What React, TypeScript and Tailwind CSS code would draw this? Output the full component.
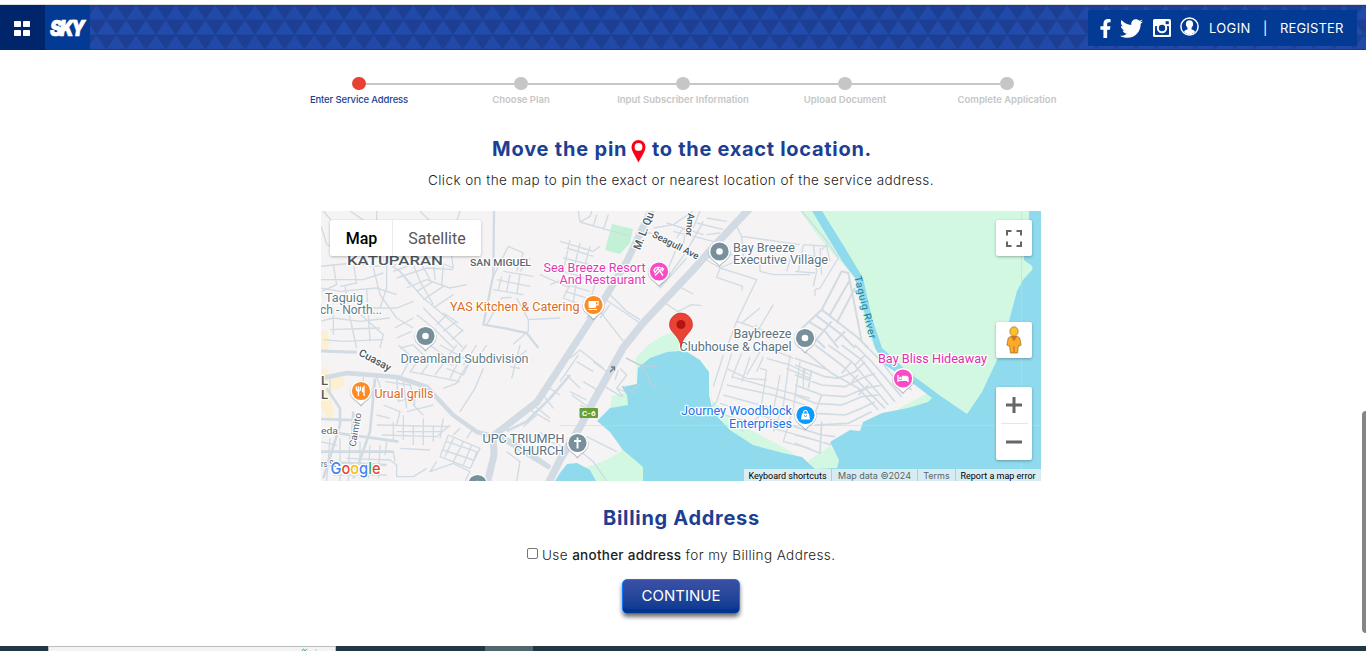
import React from "react";
import { FaFacebookF, FaTwitter } from "react-icons/fa";

const steps = [
  "Enter Service Address",
  "Choose Plan",
  "Input Subscriber Information",
  "Upload Document",
  "Complete Application",
];

function HeaderPattern() {
  return (
    <svg className="absolute inset-0 h-full w-full" aria-hidden="true">
      <defs>
        <pattern id="tri" width="19.8" height="30" x="7.4" y="0" patternUnits="userSpaceOnUse">
          <rect width="19.8" height="30" fill="#1c3f94" />
          <path d="M9.9 0.5 19.6 14.5H.2z" fill="#214aa8" />
          <path d="M0 15.5 9.6 29.5H-9.6zM19.8 15.5 29.4 29.5H10.2z" fill="#214cab" />
        </pattern>
      </defs>
      <rect width="100%" height="100%" fill="url(#tri)" />
      <rect y="44" width="100%" height="1" fill="#173a8c" />
    </svg>
  );
}

function InstagramIcon() {
  return (
    <svg width="18" height="18" viewBox="0 0 18 18">
      <rect width="18" height="18" rx="1.5" fill="#fff" />
      <rect x="2" y="7" width="14" height="9" rx="0.8" fill="#033a93" />
      <rect x="12.6" y="2.2" width="3.2" height="3" fill="#033a93" />
      <circle cx="9" cy="9" r="5.2" fill="#fff" />
      <circle cx="9" cy="9" r="3.2" fill="#033a93" />
    </svg>
  );
}

function UserIcon() {
  return (
    <svg width="19" height="19" viewBox="0 0 19 19" fill="none">
      <circle cx="9.5" cy="9.5" r="8.6" stroke="#fff" strokeWidth="1.5" />
      <path
        fill="#fff"
        d="M9.5 3.3c2.4 0 3.6 1.6 3.6 3.7 0 1.6-.7 2.8-1.6 3.7v1.5c.9.7 2.7.9 3.5 2.2-1.4 1.9-3.3 2.8-5.5 2.8s-4.1-.9-5.5-2.8c.8-1.3 2.6-1.5 3.5-2.2v-1.5C6.600 9.800 5.900 8.600 5.900 7c0-2.100 1.200-3.700 3.600-3.700z"
      />
    </svg>
  );
}

function Header() {
  return (
    <header className="relative flex h-[45px] shrink-0 justify-between bg-[#1c3f94]">
      <HeaderPattern />
      <div className="relative flex">
        <button className="flex h-[45px] w-[45px] items-center justify-center bg-[#00256a] pt-px pr-px">
          <svg width="16" height="15" viewBox="0 0 16 15" fill="#fff">
            <rect width="7" height="6" rx="0.8" />
            <rect x="9" width="7" height="6" rx="0.8" />
            <rect y="9" width="7" height="6" rx="0.8" />
            <rect x="9" y="9" width="7" height="6" rx="0.8" />
          </svg>
        </button>
        <div className="flex h-[45px] w-[45px] items-center justify-center bg-[#033a93]">
          <svg width="45" height="45" viewBox="0 0 45 45" className="overflow-visible">
            <g transform="translate(5 31) scale(.88 1.05)">
              <text
                fill="#fff"
                stroke="#fff"
                strokeWidth="0.7"
                letterSpacing="-2.6"
                className="font-[Inter,sans-serif] text-[20.5px] font-black italic"
              >
                SKY
              </text>
            </g>
          </svg>
        </div>
      </div>
      <div className="relative mt-[5px] mr-[9px] flex h-9 w-[269px] items-center bg-[#033a93] text-[13px] text-white">
        <FaFacebookF className="ml-[11px] h-[19px] w-[13px]" />
        <FaTwitter className="ml-[8px] h-[23px] w-[23px]" />
        <span className="ml-[10px] -mt-px">
          <InstagramIcon />
        </span>
        <span className="ml-[9px] -mt-[3px]">
          <UserIcon />
        </span>
        <span className="mt-[2px] ml-[10px] w-[42px] whitespace-nowrap tracking-[0.35px]">LOGIN</span>
        <span className="mt-px ml-[12px] w-[5px]">|</span>
        <span className="mt-[2px] ml-[12px] whitespace-nowrap tracking-[0.15px]">REGISTER</span>
      </div>
    </header>
  );
}

function Stepper() {
  return (
    <ol className="mx-auto mt-[27px] grid w-[810px] grid-cols-5">
      {steps.map((s, i) => (
        <li key={s} className="flex flex-col items-center">
          <div className="flex h-[13px] w-full items-center">
            <div className={i === 0 ? "h-[2px] flex-1" : "h-[2px] flex-1 bg-[#c6c6c6]"} />
            <div
              className={
                i === 0
                  ? "h-[13px] w-[14px] rounded-full bg-[#e84134]"
                  : "h-[13px] w-[14px] rounded-full bg-[#c6c6c6]"
              }
            />
            <div className={i === 4 ? "h-[2px] flex-1" : "h-[2px] flex-1 bg-[#c6c6c6]"} />
          </div>
          <span
            className={
              i === 0
                ? "mt-[3px] text-[9.5px] leading-[14px] font-medium tracking-[-0.14px] whitespace-nowrap text-[#1c3f94]"
                : "mt-[3px] text-[9.5px] leading-[14px] font-semibold whitespace-nowrap text-[#c6c6c6]"
            }
          >
            {s}
          </span>
        </li>
      ))}
    </ol>
  );
}

type LabelProps = {
  x: number;
  y: number;
  w: number;
  fill: string;
  children: string;
  size?: number;
  weight?: number;
  rotate?: number;
};

function Label({ x, y, w, fill, children, size = 12.3, weight = 400, rotate = 0 }: LabelProps) {
  return (
    <text
      x={x}
      y={y}
      fill={fill}
      fontSize={size}
      fontWeight={weight}
      textLength={w}
      lengthAdjust="spacingAndGlyphs"
      stroke="#fff"
      strokeWidth={2.4}
      strokeLinejoin="round"
      paintOrder="stroke"
      transform={rotate ? `rotate(${rotate} ${x} ${y})` : undefined}
    >
      {children}
    </text>
  );
}

function Pin({ x, y, fill, children }: { x: number; y: number; fill: string; children: React.ReactNode }) {
  return (
    <g transform={`translate(${x} ${y})`}>
      <path d="M0-10.600A10.600 10.600 0 0 1 7.800 7.200C5 9.800 2.500 11 0 14.500-2.500 11-5 9.800-7.800 7.200A10.600 10.600 0 0 1 0-10.600z" fill="#76838c" stroke="#76838c" strokeWidth=".6" opacity=".55" transform="translate(0 .7)" />
      <path d="M0-10.600A10.600 10.600 0 0 1 7.800 7.200C5 9.800 2.500 11 0 14-2.500 11-5 9.800-7.800 7.200A10.600 10.600 0 0 1 0-10.600z" fill="#fff" />
      <circle r="9.100" fill={fill} />
      {children}
    </g>
  );
}

function Roads() {
  return (
    <g fill="none" stroke="#d1dbe4" strokeLinejoin="round">
      <g transform="translate(320 208) scale(.33333)" strokeWidth="4">
        <path d="M0 48 12 80 20 110 60 125 180 150 240 190 310 270 370 320 430 370M10 9 70 80 130 110M90 9 150 50 210 60M170 9V50M300 9 330 40M420 9 410 40" />
        <path d="M0 175 100 165 160 175 230 170M40 170 50 230 5 250M100 165 110 225 60 235M0 215 130 215 190 195M75 235 90 330 110 420M0 240 60 250 170 240 230 260M200 150 200 240 180 300M160 180 180 260 230 330 280 360M0 340 40 330 120 340 210 330M120 300 230 300 280 280M40 300V380M100 300 190 380 180 420M30 365 180 360M140 240 150 400M10 395 70 400 190 395" />
        <path d="M220 190 330 150 400 180 390 110M230 210 320 180 400 185M260 240 320 215 390 240 440 230M240 190 270 230M280 170 300 220 340 290M300 160 330 215M340 155 345 215M370 170 365 230M290 250 340 220M310 275 370 235M340 300 400 260" />
        <path d="M290 320 340 360 400 420M310 300 370 360 430 420M370 315 415 345M350 350 380 320M370 370 410 340M395 395 430 365M225 360 280 330M230 390 275 370M240 420 280 410" />
        <path d="M520 205 565 115 610 135 590 190M540 150 600 165M550 190 640 205M530 215 630 235M520 245 610 260M545 205 535 245M570 200 560 250M600 200 590 260M630 150 600 190M660 200 750 240M690 230 740 210M590 270 625 335 720 330M625 335V370L580 408M500 350 545 270 575 268" />
        <path strokeWidth="7" d="M522 9 520 200 490 350 560 362 620 375 655 420" />
      </g>
      <g transform="translate(320 345) scale(.33333)" strokeWidth="4">
        <path strokeWidth="9" d="M0 18 110 22M0 100 80 85 120 90" />
        <path d="M235 0 275 35 240 100M280 0 320 40 400 60M330 0 370 30M360 0 450 50 430 90 380 70M440 0 400 50M410 0 380 40M470 0 430 60M300 40 270 80 420 110M330 50 305 85M370 55 345 90M410 60 390 100M440 60 410 115 370 130M490 70 465 130 420 200M600 0 575 100M580 50 620 15M570 65 600 70M500 0 480 30" />
        <path strokeWidth="8" d="M20 130 60 190V240L10 400M0 222 120 226M20 260 235 290M0 320 220 320M0 350 200 360M165 100 150 260 100 400M100 200 95 300" />
        <path d="M30 100V140M130 90V140M170 95 190 150 250 160M195 110 270 120M230 100 235 170 290 150M250 110 260 190M270 115 285 180M300 120 280 180 310 210M190 180 240 200 230 240M170 210 210 220M260 200 300 190 340 180M170 240 390 245M185 270 350 275 390 240M200 290 195 330M220 230V290M250 210V285M280 240V300M310 220V300M340 240V290M370 220 360 280M230 260H370M240 310 330 315M220 320 225 350" />
        <path d="M60 280V408M90 270 85 408M30 280 20 408M120 290V400M150 300 145 400M180 300 175 400M60 370H170M0 290 50 300M80 340 210 345 230 360V395H280L320 370M40 390H200" />
        <path d="M385 270 480 310 450 370 360 335 385 270M400 280 375 335M430 290 400 350M455 300 430 360M380 290 470 320M370 315 460 345M350 350 330 380 400 355 450 380 435 408M420 250 400 270M460 250 440 280M470 320 460 350M540 295 560 270" />
        <path strokeWidth="8" d="M530 265 600 300 690 365M560 258 620 230 690 160 750 90" />
        <path d="M630 195 690 230M650 210 610 245M640 180 690 220M670 150 700 190M690 130 720 150M560 320 600 350 590 408M660 260 690 290 740 310" />
      </g>
      <g transform="translate(560 208) scale(.33333)" strokeWidth="4">
        <path d="M55 9 60 42 210 85M60 42 90 25 95 9M100 55 110 20M130 65 145 20M0 100 100 130 120 115M30 95 10 190 60 205M20 120 100 145M10 150 110 175M60 105 40 190M90 115 70 190M40 210 10 270 60 290M60 205 110 225M20 230 90 250M15 250 80 270M50 220 40 280M110 210 90 280M80 330 120 280M130 270 240 345M150 260 200 310 240 335M120 310 190 400M150 290 120 330" />
        <path d="M250 70 310 85 320 115M280 60 340 50 400 9M320 45 430 80M340 70 460 100M370 60 350 90M380 50 370 110M420 9 400 60M430 40 380 130 300 240M410 45 490 65M440 80 480 75M350 120 300 240 380 150M440 30 500 40M355 235 400 258M315 285 360 315M350 312 395 290 425 293" />
        <path d="M530 55 545 85 720 110M545 85 550 150M430 150 480 180 550 150M480 180 470 208 548 235 545 248M480 180 560 205 590 215 530 340 500 420M600 160V190L640 200H750M700 120 680 190M640 290 580 390M530 340 620 370M545 345 600 300M560 408 590 350M430 150 520 140" />
      </g>
      <g transform="translate(560 345) scale(.33333)" strokeWidth="4">
        <path d="M30 40 60 15 130 70M0 110 55 30M20 90 60 130M50 50 100 80M30 140 80 165M35 150 90 190M70 110 120 140M100 50 155 90M90 180 120 150M60 180 80 190M180 70 200 90 170 130 220 150M175 75 165 105M200 40 240 60 290 70M135 125 185 155M240 118 215 140M170 130 190 155M80 275 170 320M50 310 100 350 140 408" />
        <path d="M490 30 460 125M515 25 470 170 450 190M545 25 515 100M570 35 545 110M600 20 560 90M500 70 560 100 620 105M515 95 640 130 750 160M500 120 640 150 750 185M490 150 620 185 750 220M480 175 600 210 750 260M475 205 620 245 750 280M520 230 550 260M620 75 600 210 570 240M660 90 640 200 610 250M690 30 670 180 640 260M720 50 700 190 670 290 750 310M590 80 610 35M600 70 620 75M620 40 690 60 750 90M640 15 700 40M680 70 750 100M730 70V130" />
      </g>
      <g transform="translate(795 208) scale(.33333)" strokeWidth="4">
        <path d="M20 9 100 105 130 150 75 240 60 245V265M25 110 100 115M25 110 10 190M55 110 65 190 55 235M75 120 80 200M100 105 80 125M30 140 100 155M0 190 60 195M95 115 105 160" />
        <path strokeWidth="6" d="M0 380 80 305 140 190 160 195 200 400M80 305 190 390 220 420M105 320 165 215M125 345 180 240M60 320 140 380 180 420M40 340 90 370 130 420M20 360 70 400 90 420M150 370 120 400M110 340 60 400" />
      </g>
      <g transform="translate(795 345) scale(.33333)" strokeWidth="5">
        <path d="M60 0 140 60 270 190M100 0 170 50 280 180M140 0 200 45 300 170M180 0 230 50 320 155M210 0 260 50 290 90 350 135M30 20 110 85 190 130 250 195M0 60 90 95 130 100 180 80 210 50M0 90 80 120 150 125 200 100 240 85M0 120 80 150 150 155 210 130 260 120M0 150 60 175 140 180 200 155 250 150M60 205 150 210 200 190 240 170M60 240 160 235 230 200M0 40 100 75M30 70 25 100M50 75 40 130M80 150 55 220M80 230 75 325M0 245 80 270 120 275M0 270 60 285 110 300M0 295 75 325M170 50 140 85M190 90 170 110M210 30 180 60M220 120 190 150" />
      </g>
      <g stroke="#d2dbe3">
        <path strokeWidth="7" d="M654 204 627 261 603 301 577 341 560 367 537 402 493 436 494 455 487 484" />
        <path strokeWidth="7.500" d="M752 206 717 243 693 270 643 323 623 348 593 402 580 427 561 458 548 484" />
        <path strokeWidth="4.500" d="M318 379 347 373 397 377 427 387 453 415 477 432 493 436 508 442 550 468" />
      </g>
    </g>
  );
}

function MapDrawing() {
  return (
    <svg width="720" height="270" viewBox="321 211 720 270" className="block font-[Roboto,sans-serif]">
      <rect x="321" y="211" width="720" height="270" fill="#f5f3f3" />
      <path d="M321 331h6l3 12-3 8h-6zM321 369l6 0 3 6 15 3-2 9-13 4 4 24-5 7-8-14z" fill="#fdf0d0" />
      <path d="M612 224 633 229 630 243 620 254 605 250z" fill="#c3f1d5" />
      <g fill="#d3f8e2">
        <path d="M637 390 636 358 648 345 664 335 678 331 690 345 690 360 645 380z" />
        <path d="M612 396 628 392 630 408 610 408zM708 372 712 400 732 420 760 435 790 451 812 470 770 475 715 430z" />
        <path d="M612 430 650 465 650 481 592 481 585 468 606 460 622 451z" />
        <path d="M800 211 812 211 850 261 860 290 875 348 866 330 857 280 828 248 818 236z" />
        <path d="M898 409 930 392 934 402 905 413zM808 461 830 446 842 460 835 470 815 473z" />
      </g>
      <Roads />
      <path
        fill="#90daee"
        d="M680 351 667 352 650 358 638 368 637 384 622 387 627 395 628 405 610 408 597 421 610 432 623 450 643 467 643 481H1041V211H812L842 261 855 278 863 308 875 348 885 365 915 385 932 398 928 402 908 408 882 413 863 422 860 431 850 430 830 442 839 460 837 468 815 469 802 457 783 453 753 445 730 430 713 412 709 395 709 372 700 360 687 352z"
      />
      <path fill="#90daee" d="M555 481 560 473 567 464 577 463 590 470 596 481z" />
      <path
        fill="#d3f8e2"
        d="M822 211 845 248 863 278 872 318 882 348 908 372 942 397 967 414 982 392 997 360 1009 321 1017 291 1023 280 1032 270Q1034 266 1028 263L1024 260V255L1029 225V211z"
      />
      <g fill="none" stroke="#bccfdb" strokeWidth="1.300">
        <path d="M626 358 640 365 657 367M640 365 648 376 650 383 658 388M640 384 631 392M622 386 636 394" />
      </g>
      <path d="M560 425.500H1041M1021.500 211V481" stroke="#b7dfe4" strokeWidth=".7" opacity=".8" />
      <path d="M610 372l4-4M611 367h3.500v3.500" stroke="#6b7d8d" strokeWidth="1.300" fill="none" />

      <Label x={347} y={265} w={96} size={13} weight={500} fill="#4f5860">KATUPARAN</Label>
      <Label x={470} y={265.5} w={61} size={9} weight={500} fill="#5d666e">SAN MIGUEL</Label>
      <Label x={543.5} y={271.5} w={102} fill="#e636b4">Sea Breeze Resort</Label>
      <Label x={559.5} y={284} w={86} fill="#e636b4">And Restaurant</Label>
      <Label x={450} y={311} w={129.5} fill="#dc6c1b">YAS Kitchen &amp; Catering</Label>
      <Label x={325} y={302} w={38} fill="#607d8b">Taguig</Label>
      <Label x={320} y={314} w={62} fill="#607d8b">ch - North...</Label>
      <Label x={400.5} y={363} w={128} fill="#607d8b">Dreamland Subdivision</Label>
      <Label x={374.5} y={397.5} w={59} fill="#dc6c1b">Urual grills</Label>
      <Label x={482.5} y={443} w={82} fill="#5a7280">UPC TRIUMPH</Label>
      <Label x={514} y={455} w={50} fill="#5a7280">CHURCH</Label>
      <Label x={733} y={251.5} w={62} fill="#5a7280">Bay Breeze</Label>
      <Label x={733} y={264} w={95} fill="#5a7280">Executive Village</Label>
      <Label x={733.5} y={338} w={58} fill="#5a7280">Baybreeze</Label>
      <Label x={679.5} y={350.5} w={112} fill="#5a7280">Clubhouse &amp; Chapel</Label>
      <Label x={681} y={415} w={111} fill="#1a73e8">Journey Woodblock</Label>
      <Label x={729} y={427.5} w={63} fill="#1a73e8">Enterprises</Label>
      <Label x={878} y={363} w={109} fill="#e32cae">Bay Bliss Hideaway</Label>
      <Label x={321} y={434} w={17} size={9} fill="#56616b">eda</Label>
      <Label x={321} y={467} w={15} size={9} fill="#56616b">rs St</Label>
      <Label x={321} y={384.5} w={7} size={13} weight={500} fill="#4f5860">L</Label>
      <Label x={321} y={399} w={7} size={13} weight={500} fill="#4f5860">L</Label>
      <Label x={358} y={355} w={35} size={10.5} weight={500} rotate={28} fill="#4a5761">Cuasay</Label>
      <Label x={355.5} y={447} w={34} size={9.5} rotate={-80} fill="#56616b">Caimito</Label>
      <Label x={640} y={250.5} w={39} size={11} weight={500} rotate={-69} fill="#4a5761">M. L. Qu</Label>
      <Label x={651.5} y={236.5} w={51} size={9.5} weight={500} rotate={27} fill="#4a5761">Seagull Ave</Label>
      <Label x={688} y={213} w={23} size={9.5} weight={500} rotate={96} fill="#4a5761">Amor</Label>
      <text x="854" y="277" fontSize="10.500" textLength="64" fill="#1d8398" transform="rotate(76 854 277)">Taguig River</text>

      <rect x="579.5" y="408" width="18.5" height="10" rx="1" fill="#689f38" />
      <text x="582" y="416" fontSize="8" fontWeight="700" textLength="13.5" fill="#fff">C-6</text>

      <Pin x={425.5} y={336} fill="#78909c"><circle r="3.3" fill="#fff" /></Pin>
      <Pin x={719.5} y={251.5} fill="#78909c"><circle r="3.3" fill="#fff" /></Pin>
      <Pin x={805} y={338} fill="#78909c"><circle r="3.3" fill="#fff" /></Pin>
      <Pin x={577.5} y={443} fill="#78909c"><path d="M0-5.500V5.500M-3.500-2h7" stroke="#fff" strokeWidth="1.9" /></Pin>
      <Pin x={477.5} y={484} fill="#78909c"><circle r="3.3" fill="#fff" /></Pin>
      <Pin x={593.5} y={305} fill="#ff8a24">
        <path d="M-5-4h7.500v5.500a1.500 1.500 0 0 1-1.500 1.500h-4.500a1.500 1.500 0 0 1-1.500-1.500zM-5 3.900h8.500v1.200h-8.500z" fill="#fff" />
        <path d="M2-3.400h2.600v3.300H2" fill="none" stroke="#fff" strokeWidth="1.200" />
      </Pin>
      <Pin x={361} y={391} fill="#ff8a24">
        <path d="M-2.600-4.500V5M-4.600-4.500v2.800q0 1.500 2 1.500t2-1.500v-2.800M3 5V-4.500Q1.200-3.500 1.500.5H3" stroke="#fff" strokeWidth="1.400" fill="none" />
      </Pin>
      <Pin x={659} y={271.5} fill="#f84bc6">
        <path d="M-5-1Q-4-5 0-4L-4 1zM-1-3 4 4M4-4-4 4M1-4l3.500 1.500L3 0" stroke="#fff" strokeWidth="1.300" fill="none" />
      </Pin>
      <Pin x={903} y={378.5} fill="#f84bc6">
        <path d="M-5-3.500V3.500M-5 1.800H5M5 3.500V0q0-2-2-2H-.5V1.500" stroke="#fff" strokeWidth="1.300" fill="none" />
        <path d="M-.5-2H4l1 3.500H-.5z" fill="#fff" /><circle cx="-2.600" cy="-.6" r="1.200" fill="#fff" />
      </Pin>
      <Pin x={805.5} y={415} fill="#0a9bff">
        <path d="M-3.500-1.500h7l1 6h-9z" fill="#fff" /><path d="M-2-1.500Q-2-4.500 0-4.500T2-1.500" stroke="#fff" fill="none" strokeWidth="1.100" />
        <path d="M-1.500.5q1.500 2 3 0" stroke="#0a9bff" fill="none" />
      </Pin>

      <path d="M681 347c-.8-6-3.200-9-6.300-12.600-2.900-3.300-5.200-5.600-5.200-9.800a11.500 11.500 0 0 1 23 0c0 4.200-2.300 6.500-5.200 9.800-3.100 3.600-5.500 6.600-6.300 12.600z" fill="#ea4335" stroke="#c5221f" strokeWidth=".6" />
      <circle cx="681" cy="324.500" r="4.500" fill="#b31412" />

      <text x="330.500" y="474" fontSize="16.500" fontWeight="500" textLength="50" lengthAdjust="spacingAndGlyphs" stroke="#fff" strokeWidth="2.500" strokeLinejoin="round" paintOrder="stroke" className="font-[Inter,sans-serif]">
        <tspan fill="#4285f4">G</tspan><tspan fill="#ea4335">o</tspan><tspan fill="#fbbc04">o</tspan><tspan fill="#4285f4">g</tspan><tspan fill="#34a853">l</tspan><tspan fill="#ea4335">e</tspan>
      </text>
    </svg>
  );
}

function Pegman() {
  return (
    <svg width="16" height="28" viewBox="0 0 18 28" preserveAspectRatio="none">
      <path d="M5 10.500h8l2.500 1.500 1.500 7-1.500 1-1.500-.5-1 7.500H5l-1-7.500-1.500.5L1 19l1.500-7z" fill="#fbab25" stroke="#8a6a2b" strokeWidth=".7" />
      <path d="M5.500 10.500h7L9 15.500z" fill="#e06c1f" />
      <path d="M9 20v7" stroke="#b8741c" strokeWidth="1" />
      <circle cx="9" cy="5.500" r="4.700" fill="#fdbf2d" stroke="#8a6a2b" strokeWidth=".7" />
    </svg>
  );
}

function MapPanel() {
  return (
    <section className="relative mt-[20px] ml-[321px] h-[270px] w-[720px] overflow-hidden font-[Roboto,sans-serif]">
      <MapDrawing />
      <div className="absolute top-[9px] left-[9px] flex h-9 rounded-[2px] bg-white text-[16px] leading-[37px] shadow-[0_1px_3px_rgba(0,0,0,0.25)]">
        <button className="w-[62px] pl-px text-center font-medium text-black">Map</button>
        <button className="w-[89px] border-l border-[#ebebeb] text-center text-[#565656]">Satellite</button>
      </div>
      <div className="absolute top-[9px] right-[9px] flex size-9 items-center justify-center rounded-[2px] bg-white shadow-[0_1px_3px_rgba(0,0,0,0.3)]">
        <svg width="16" height="17" viewBox="0 0 16 17" fill="none" stroke="#666" strokeWidth="2">
          <path d="M1 5.500V1h4.500M10.500 1H15v4.500M15 11.500V16h-4.500M5.500 16H1v-4.500" />
        </svg>
      </div>
      <div className="absolute top-[111px] right-[9px] flex size-9 items-center justify-center rounded-[2px] bg-white shadow-[0_1px_3px_rgba(0,0,0,0.3)]">
        <Pegman />
      </div>
      <div className="absolute top-[176px] right-[9px] flex h-[73px] w-9 flex-col items-center rounded-[2px] bg-white shadow-[0_1px_3px_rgba(0,0,0,0.3)]">
        <svg width="16" height="36" viewBox="0 0 16 36" fill="#666">
          <path d="M6.500 10h3v6.500H16v3H9.500V26h-3v-6.500H0v-3h6.500z" />
        </svg>
        <div className="h-px w-[27px] bg-[#e6e6e6]" />
        <svg width="16" height="36" viewBox="0 0 16 36" fill="#666">
          <rect y="16.500" width="16" height="3" />
        </svg>
      </div>
      <div className="absolute right-0 bottom-0 flex h-3 gap-px text-[9px] leading-[14px] whitespace-nowrap text-black">
        <span className="w-[87px] bg-[#e4eef2]/90 text-center">Keyboard shortcuts</span>
        <span className="w-[85px] bg-[#e4eef2]/85 text-center font-[Inter,sans-serif] text-[#5a6468]">Map data ©2024</span>
        <span className="w-[37px] bg-[#e4eef2]/85 text-center font-[Inter,sans-serif] text-[#5a6468]">Terms</span>
        <span className="w-[85px] bg-[#e4eef2]/85 pr-px text-center">Report a map error</span>
      </div>
    </section>
  );
}

export default function App() {
  return (
    <div className="relative flex h-[651px] w-full flex-col overflow-hidden bg-white font-[Inter,sans-serif]">
      <div className="h-[5px] shrink-0 border-b border-[#dcdcdc]" />
      <Header />
      <main className="flex flex-1 flex-col">
        <Stepper />
        <h1 className="mt-[29px] ml-[492px] flex h-[26px] items-center text-[20px] leading-[26px] font-bold whitespace-nowrap text-[#1c3f94]">
          <span className="w-[139px] tracking-[0.8px]">Move the pin</span>
          <svg width="15" height="23" viewBox="0 0 15 23" className="mt-[4px]">
            <path
              fill="#fb0017"
              fillRule="evenodd"
              d="M7.500 0A7 7 0 0 1 14.500 7C14.500 11 11 15.500 7.500 22.500 4 15.500.5 11 .5 7A7 7 0 0 1 7.500 0zM7.500 3a3.900 3.900 0 1 0 0 7.800 3.900 3.900 0 0 0 0-7.800z"
            />
          </svg>
          <span className="ml-[6px] tracking-[0.7px]">to the exact location.</span>
        </h1>
        <p className="mt-[7px] ml-[428px] text-[13.5px] leading-[22px] font-light tracking-[0.43px] whitespace-nowrap text-[#222]">
          Click on the map to pin the exact or nearest location of the service address.
        </p>
        <MapPanel />
        <h2 className="mt-[24px] ml-[603px] text-[20px] leading-[26px] font-bold tracking-[0.7px] whitespace-nowrap text-[#1c3f94]">
          Billing Address
        </h2>
        <label className="mt-[13px] ml-[527px] flex h-[22px] items-center text-[13.5px] whitespace-nowrap text-[#222]">
          <input type="checkbox" className="mr-1 -mt-[3px] h-[11px] w-[11px] appearance-none rounded-[2px] border border-[#767676]" />
          <span className="font-light tracking-[0.4px]">
            Use <b className="font-medium tracking-[0.27px]">another address</b> for my Billing Address.
          </span>
        </label>
        <button className="mt-[13px] ml-[622px] h-[35px] w-[118px] rounded-[5px] border border-[#0a78ff] bg-linear-to-b from-[#3a50a5] via-[#24479b] to-[#033590] pb-px text-[15px] text-white shadow-[inset_0_-4px_0_#02338f,0_3px_4px_rgba(0,0,0,0.55)]">
          CONTINUE
        </button>
      </main>
      <footer className="flex h-[5px] shrink-0 bg-[#203843]">
        <div className="ml-[48px] flex h-[5px] w-[288px] justify-end border border-b-0 border-[#bdbdbd] bg-[#f3f3f3] pr-[14px]">
          <svg width="20" height="3" viewBox="0 0 20 3" className="mt-px">
            <path d="M1 3 2.500.8 4 3 6 .8" stroke="#4fae82" fill="none" />
            <path d="M14 2h2" stroke="#a9d8c2" />
          </svg>
        </div>
        <div className="ml-[149px] h-[5px] w-[48px] bg-[#52666d]" />
      </footer>
      <div className="absolute top-[411px] right-0 h-[222px] w-[4px] rounded-l-full bg-[#858585]" />
    </div>
  );
}
